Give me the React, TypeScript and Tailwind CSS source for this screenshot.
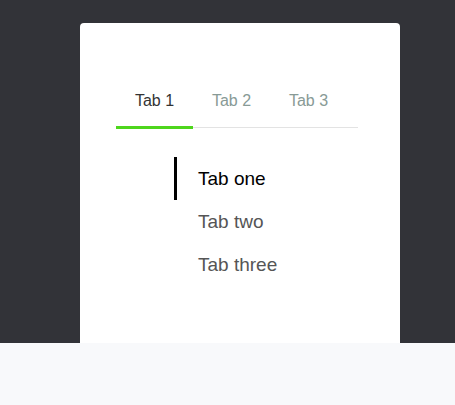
import React, { useState } from "react";

export default function App() {
  const [top, setTop] = useState(0);
  const [side, setSide] = useState(0);
  const tabs = ["Tab 1", "Tab 2", "Tab 3"];
  const vtabs = ["Tab one", "Tab two", "Tab three"];
  return (
    <div className="w-[455px] h-[405px] flex flex-col" style={{ fontFamily: '"Liberation Sans", Arial, sans-serif' }}>
      <div className="h-[343px] bg-[#323338] overflow-hidden pt-[23px] pl-[80px]">
        <div className="w-[320px] h-[340px] bg-white rounded-t-[4px] pt-[65px] pl-[36px]">
          <div className="w-[242px] flex border-b border-[#e3e3e3]">
            {tabs.map((t, i) => (
              <button
                key={t}
                onClick={() => setTop(i)}
                className={`w-[77px] px-0 pt-[1px] pb-[13px] -mb-[2px] text-[16px] leading-[24px] text-center border-b-[3px] ${
                  i === top ? "border-[#4ed61c] text-[#333333]" : "border-transparent text-[#889a96]"
                }`}
              >
                {t}
              </button>
            ))}
          </div>
          <div className="mt-[29px] ml-[58px] flex flex-col">
            {vtabs.map((t, i) => (
              <button
                key={t}
                onClick={() => setSide(i)}
                className={`h-[43px] text-left text-[19px] leading-[43px] pl-[21px] border-l-[3px] ${
                  i === side ? "border-black text-black" : "border-transparent text-[#555555]"
                }`}
              >
                {t}
              </button>
            ))}
          </div>
        </div>
      </div>
      <div className="flex-1 bg-[#f8f9fb]" />
    </div>
  );
}
